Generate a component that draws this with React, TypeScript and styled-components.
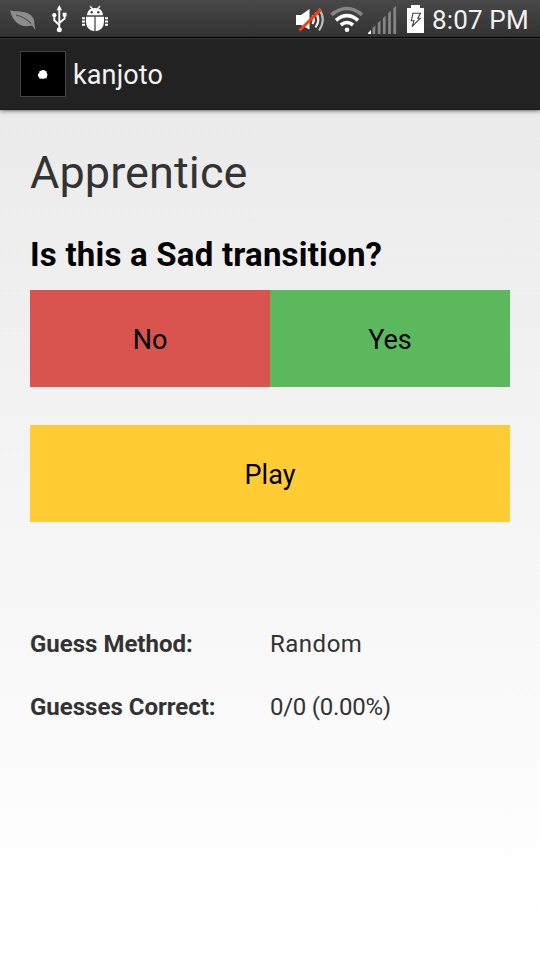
import React from "react";
import styled, { createGlobalStyle } from "styled-components";

const GlobalStyle = createGlobalStyle`
  html, body { margin: 0; padding: 0; }
  body { font-family: Roboto, "Liberation Sans", sans-serif; background: #fff; }
`;

const Screen = styled.div`
  display: flex;
  flex-direction: column;
  width: 540px;
  height: 960px;
  overflow: hidden;
  background: linear-gradient(#e8e8e8 0, #fefefe 870px, #fff 100%);
`;

const StatusBar = styled.header`
  display: flex;
  justify-content: space-between;
  box-sizing: border-box;
  height: 38px;
  flex: none;
  background: linear-gradient(#484848, #333 36px);
  border-bottom: 1px solid #000;
`;

const StatusTime = styled.time`
  width: 108px;
  font-size: 26px;
  line-height: 40px;
  letter-spacing: 0.15px;
  color: #f2f2f2;
  white-space: nowrap;
`;

const ActionBar = styled.div`
  display: flex;
  align-items: flex-start;
  box-sizing: border-box;
  flex: none;
  height: 72px;
  padding: 12px 20px 0;
  gap: 7px;
  background: #222;
  border-top: 1px solid #363636;
  border-bottom: 1px solid #191919;
  box-shadow: 0 1px 4px rgba(0, 0, 0, 0.55);
`;

const AppIcon = styled.div`
  display: grid;
  box-sizing: border-box;
  width: 46px;
  height: 46px;
  background: #000;
  border: 1px solid #444;
`;

const AppTitle = styled.span`
  font-size: 27px;
  line-height: 48px;
  letter-spacing: 0.12px;
  color: #f3f3f3;
`;

const Content = styled.main`
  display: flex;
  flex-direction: column;
  padding: 31px 30px 0;
`;

const Level = styled.h1`
  margin: 0;
  height: 64px;
  font-size: 45px;
  line-height: 64px;
  letter-spacing: 0.1px;
  font-weight: 400;
  color: #333;
`;

const Question = styled.h2`
  margin: 26px 0 0;
  height: 59px;
  font-size: 33px;
  line-height: 48px;
  letter-spacing: 0.21px;
  font-weight: 700;
  color: #000;
`;

const AnswerRow = styled.div`
  display: grid;
  grid-template-columns: 1fr 1fr;
  margin-bottom: 38px;
`;

const Button = styled.button<{ $color: string }>`
  height: 97px;
  margin: 0;
  padding: 3px 0 0;
  border: 0;
  border-radius: 0;
  background: ${(p) => p.$color};
  color: #000;
  font: 400 27px Roboto, sans-serif;
`;

const Stats = styled.dl`
  display: grid;
  grid-template-columns: 240px 1fr;
  grid-auto-rows: 63px;
  margin: 91px 0 0;
  font-size: 24px;
  line-height: 63px;
  color: #333;
`;

const StatLabel = styled.dt`
  font-weight: 700;
`;

const StatValue = styled.dd<{ $tracking: number }>`
  margin: 0;
  letter-spacing: ${(p) => p.$tracking}px;
`;

const LeftIcons = () => (
  <svg width="120" height="37" viewBox="0 0 120 37">
    <path d="M10 10.500C19 12 29 10 33.500 18.500C34.500 21 34 23 35.500 30C33.500 28 33.500 26 31.500 25.500C24 28 13.500 25 10 10.500Z" fill="#8d8d8d" />
    <path d="M16 15Q25 17 31 23.500" fill="none" stroke="#4d4d4d" strokeWidth="1.200" />
    <g fill="none" stroke="#fff" strokeWidth="1.900">
      <path d="M59.300 9V29M54.300 15.500V20.300L59.300 25M64.600 14.500V18.500L59.300 23" />
    </g>
    <g fill="#fff">
      <path d="M59.300 5L62 10.200H56.600Z" />
      <circle cx="54.300" cy="15.200" r="2.100" />
      <rect x="62.700" y="12.700" width="3.800" height="3.800" />
      <circle cx="59.300" cy="29.800" r="2.500" />
      <path d="M87 15.200Q87.500 10 91.500 8.800L89.500 6.500L90.500 5.800L93 8.300Q95 7.800 97 8.300L99.500 5.800L100.500 6.500L98.500 8.800Q102.500 10 103 15.200Z" />
      <path d="M86 16.800H94.400V31.200Q86 30.500 86 21.500ZM95.600 16.800H104V21.500Q104 30.500 95.600 31.200Z" />
      <path d="M82 17.300H85V19.300H82ZM82 20.500H85V22.500H82ZM82 23.700H85V25.700H82ZM105 17.300H108V19.300H105ZM105 20.500H108V22.500H105ZM105 23.700H108V25.700H105Z" />
    </g>
    <g fill="#444">
      <circle cx="91.700" cy="12.200" r="1.200" />
      <circle cx="98.300" cy="12.200" r="1.200" />
    </g>
  </svg>
);

const bars = [0, 1, 2, 3, 4];

const RightIcons = () => (
  <svg width="142" height="37" viewBox="290 0 142 37">
    <path d="M296 15H301L309.500 9V29.500L301 25H296Z" fill="#fff" />
    <g fill="none" strokeWidth="2.200">
      <path d="M312.500 15.500Q315 19.500 312.500 24" stroke="#fff" />
      <path d="M315.500 12.500Q321 19.500 315.500 27.500" stroke="#eee" />
      <path d="M319 9Q326.500 19.500 319 30.500" stroke="#bbb" />
    </g>
    <path d="M299.500 30.500L320.500 9.800" stroke="#ff3a0c" strokeWidth="3" />
    <g fill="none" strokeWidth="3.600">
      <path d="M331.500 14.800Q347 2.200 362 14.800" stroke="#868686" />
      <path d="M336 20.300Q347 11 358 20.300" stroke="#fff" />
      <path d="M340.800 25Q347 20 353 25" stroke="#fff" />
    </g>
    <circle cx="347" cy="29.800" r="2.300" fill="#fff" />
    <path d="M368 34V33L371 30V34Z" fill="#fff" />
    <g fill="#858585">
      {bars.map((i) => {
        const x = 372.500 + i * 5.200;
        const top = 28 - i * 4.900;
        return <path key={i} d={`M${x} ${top}L${x + 2.8} ${top - 2.7}V34H${x}Z`} />;
      })}
    </g>
    <path d="M411 5H420V8H424V33H407V8H411Z" fill="#fff" />
    <path d="M413 13.300H420.500L417.800 18.200H420.300L412 26.700L414 20.800H411.300Z" fill="none" stroke="#444" strokeWidth="1.100" />
  </svg>
);

const RightStatus = styled.div`
  display: flex;
`;

const BlobIcon = () => (
  <svg width="44" height="44" viewBox="0 0 44 44">
    <path d="M18.500 19L20.500 18.800L21 18H23.300L24 19L25.500 19.300L25.700 21L26.500 22.500L26 24L25.500 26.500L23.500 26.300L22 27L20.500 26.500L18.500 26.800L18 25.200L17 24V22L18.300 21Z" fill="#fff" />
  </svg>
);

export default function App() {
  return (
    <>
      <GlobalStyle />
      <Screen>
        <StatusBar>
          <LeftIcons />
          <RightStatus>
            <RightIcons />
            <StatusTime>8:07 PM</StatusTime>
          </RightStatus>
        </StatusBar>
        <ActionBar>
          <AppIcon><BlobIcon /></AppIcon>
          <AppTitle>kanjoto</AppTitle>
        </ActionBar>
        <Content>
          <Level>Apprentice</Level>
          <Question>Is this a Sad transition?</Question>
          <AnswerRow>
            <Button $color="#d9534f">No</Button>
            <Button $color="#5cb85c">Yes</Button>
          </AnswerRow>
          <Button $color="#ffcc33">Play</Button>
          <Stats>
            <StatLabel>Guess Method:</StatLabel>
            <StatValue $tracking={0.5}>Random</StatValue>
            <StatLabel>Guesses Correct:</StatLabel>
            <StatValue $tracking={-0.27}>0/0 (0.00%)</StatValue>
          </Stats>
        </Content>
      </Screen>
    </>
  );
}
